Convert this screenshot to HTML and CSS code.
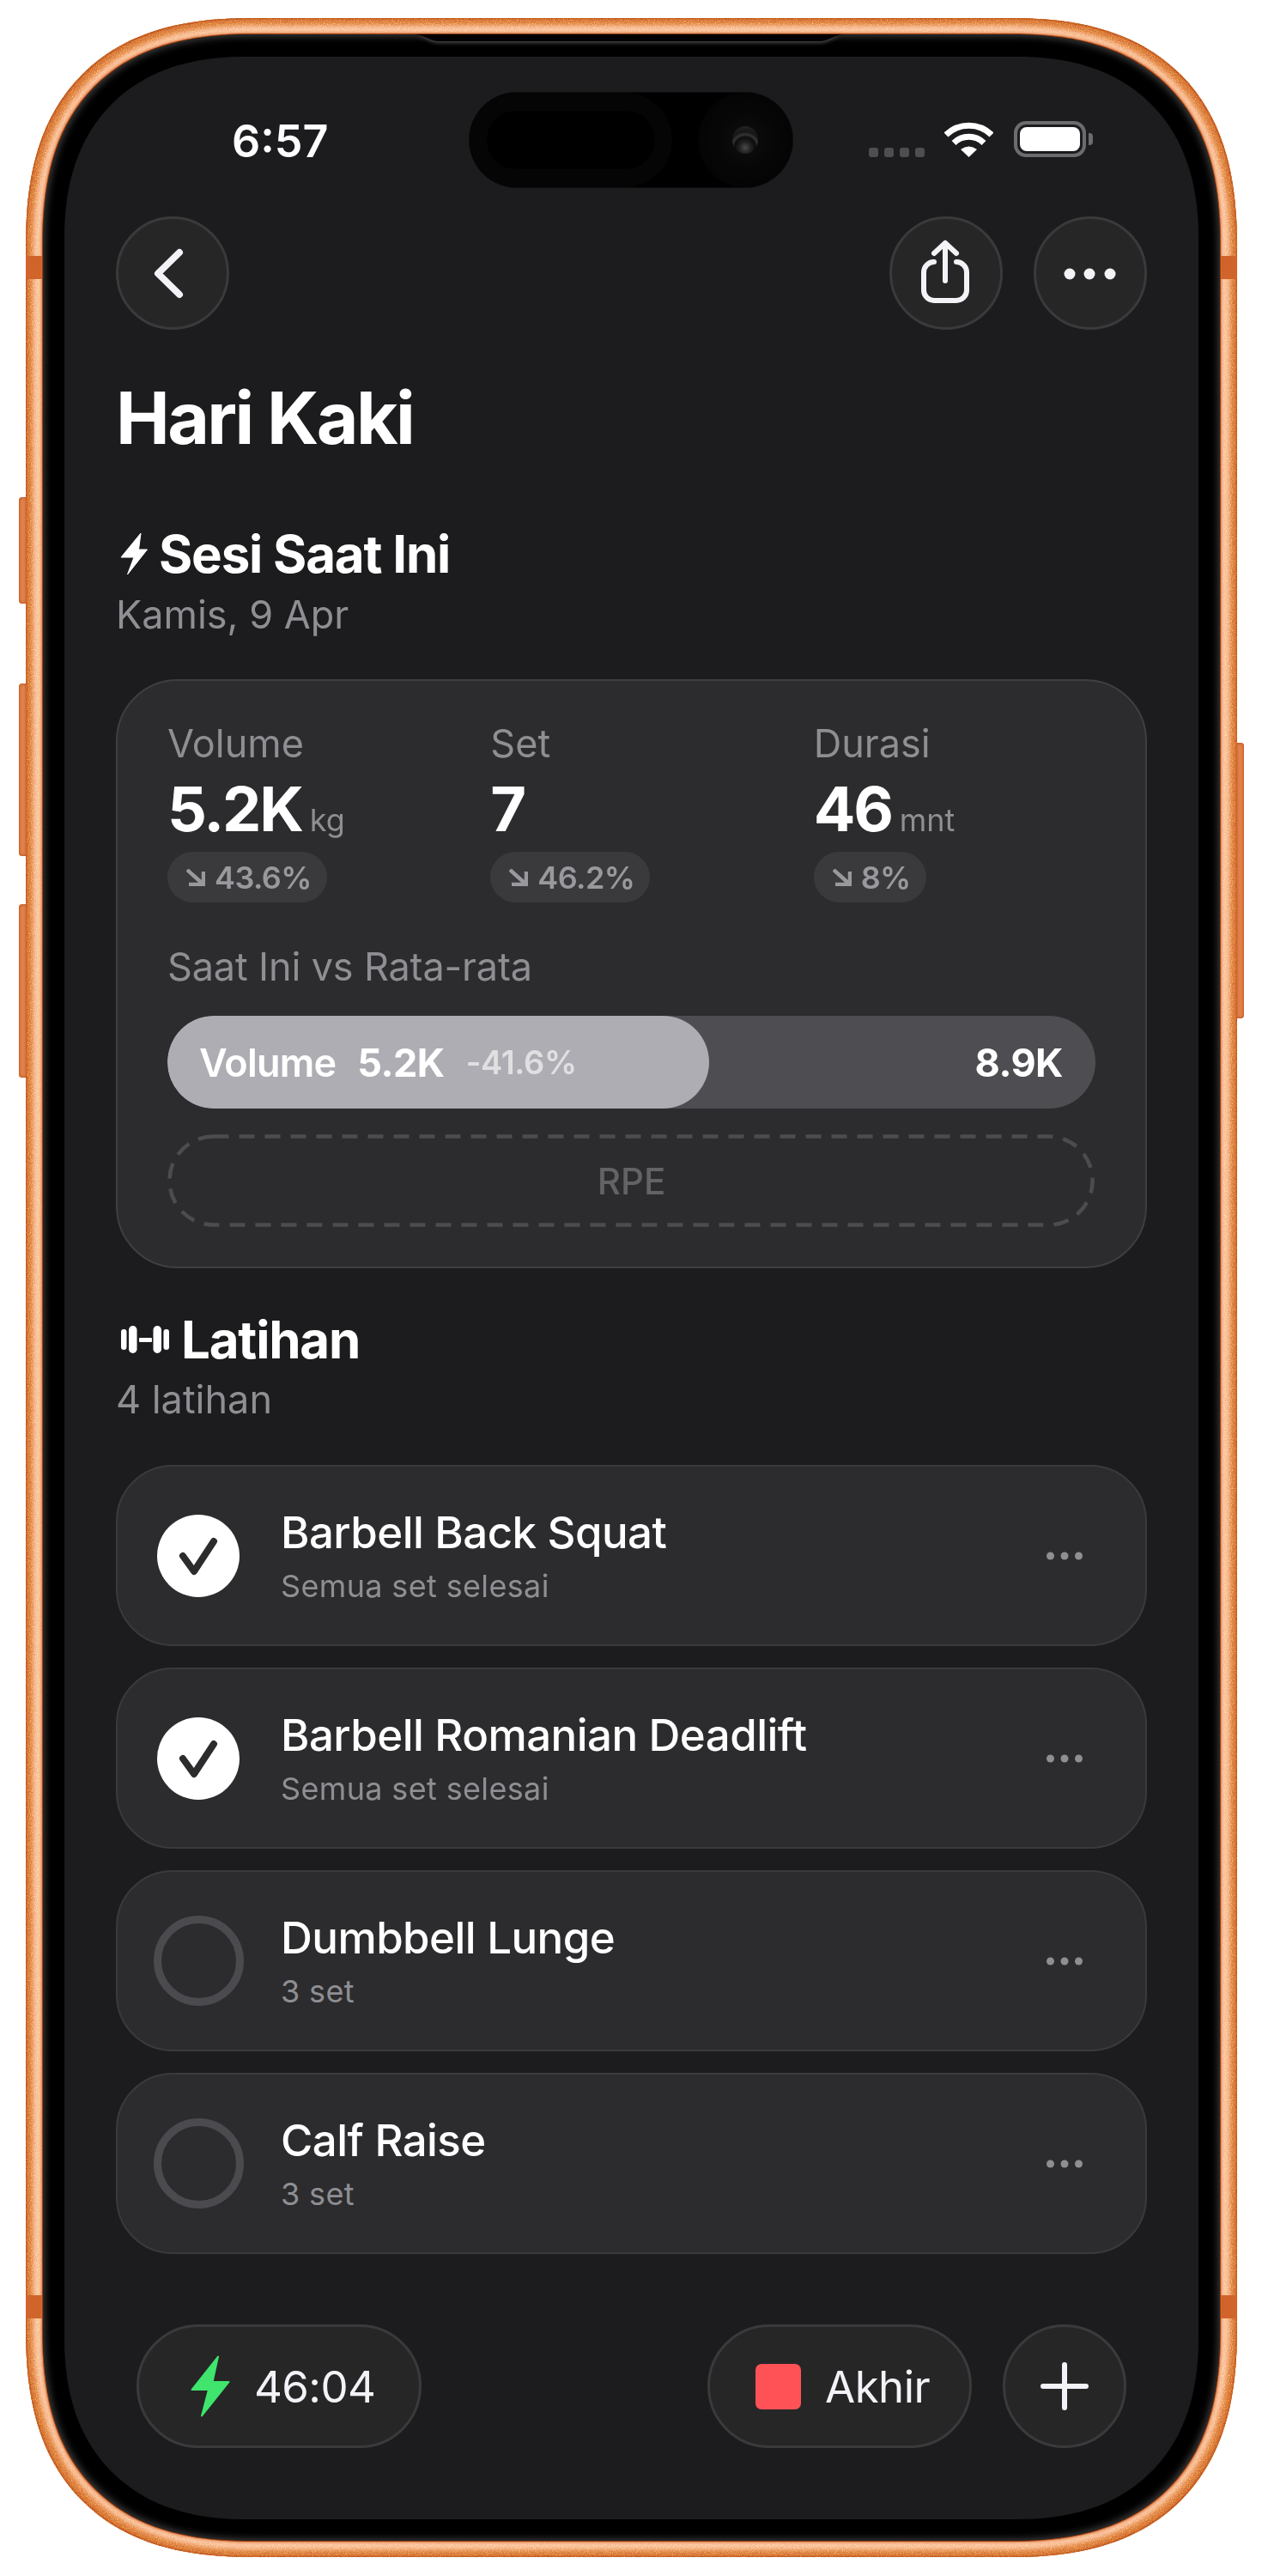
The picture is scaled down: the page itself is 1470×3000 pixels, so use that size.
FILE: index.html
```html
<!DOCTYPE html>
<html lang="id">
<head>
<meta charset="utf-8">
<title>Hari Kaki</title>
<link rel="stylesheet" href="styles.css">
</head>
<body>
<div class="phone">
  <svg class="grain" width="1411" height="2957" aria-hidden="true"><filter id="grainf"><feTurbulence type="fractalNoise" baseFrequency="0.9" numOctaves="2" seed="4"/><feColorMatrix values="0 0 0 0 1  0 0 0 0 .7  0 0 0 0 .5  0 0 0 2 -.85"/></filter><rect width="1411" height="2957" filter="url(#grainf)"/></svg>
  <span class="hw hw-a"></span><span class="hw hw-b"></span><span class="hw hw-c"></span><span class="hw hw-d"></span>
  <span class="band band-tl"></span><span class="band band-tr"></span><span class="band band-bl"></span><span class="band band-br"></span>
  <div class="bezel">
    <svg class="lip" width="514" height="12" viewBox="0 0 514 12" aria-hidden="true"><path d="M4 0C20 0 22 7 34 8H480C492 7 494 0 510 0Z"/></svg>
    <main class="screen">
      <div class="status">
        <span class="time">6:57</span>
        <div class="island"><div class="isl-left"><div class="isl-inner"></div></div><div class="isl-cam"><div class="lens"></div></div></div>
        <div class="status-right">
          <div class="signal"><i></i><i></i><i></i><i></i></div>
          <svg class="wifi" width="57" height="41" viewBox="0 0 57 41"><path d="M2 15A38 38 0 0 1 55 15" fill="none" stroke="#fff" stroke-width="7"/><path d="M11 24.500A25 25 0 0 1 46 24.500" fill="none" stroke="#fff" stroke-width="7"/><path d="M28.500 41L19 32Q28.500 25 38 32Z" fill="#fff"/></svg>
          <div class="battery"><div class="battery-fill"></div></div>
          <span class="battery-nub"></span>
        </div>
      </div>

      <nav class="nav">
        <button class="round" aria-label="Kembali"><svg width="132" height="132" viewBox="0 0 132 132" class="ico ico-back"><path d="M74 42L49 66.500L74 91"/></svg></button>
        <span class="spacer"></span>
        <button class="round" aria-label="Bagikan"><svg width="132" height="132" viewBox="0 0 132 132" class="ico"><path d="M52 53H52A12 12 0 0 0 40 65V86A12 12 0 0 0 52 98H78A12 12 0 0 0 90 86V65A12 12 0 0 0 78 53"/><path d="M65 75V32M52 43L65 31L78 43"/></svg></button>
        <button class="round" aria-label="Lainnya"><svg width="132" height="132" viewBox="0 0 132 132"><circle cx="42" cy="67" r="6.500" fill="#f2f2f7"/><circle cx="65" cy="67" r="6.500" fill="#f2f2f7"/><circle cx="89" cy="67" r="6.500" fill="#f2f2f7"/></svg></button>
      </nav>

      <div class="content">
        <h1 class="title">Hari Kaki</h1>

        <h2 class="head head-session"><svg width="32" height="50" viewBox="0 0 32 50"><path d="M24 1L1 29H16L8.500 49L31.500 20H21.500Z" fill="#fff" stroke="#fff" stroke-width="1" stroke-linejoin="round"/></svg><span>Sesi Saat Ini</span></h2>
        <p class="sub">Kamis, 9 Apr</p>

        <section class="card">
          <div class="stats">
            <div class="stat">
              <div class="stat-label">Volume</div>
              <div class="stat-value">5.2K<small>kg</small></div>
              <div class="delta"><svg width="22" height="20" viewBox="0 0 22 20" class="arrow"><path d="M1 1L20 18M20 3V18H3"/></svg>43.6%</div>
            </div>
            <div class="stat">
              <div class="stat-label">Set</div>
              <div class="stat-value">7</div>
              <div class="delta"><svg width="22" height="20" viewBox="0 0 22 20" class="arrow"><path d="M1 1L20 18M20 3V18H3"/></svg>46.2%</div>
            </div>
            <div class="stat">
              <div class="stat-label">Durasi</div>
              <div class="stat-value">46<small>mnt</small></div>
              <div class="delta"><svg width="22" height="20" viewBox="0 0 22 20" class="arrow"><path d="M1 1L20 18M20 3V18H3"/></svg>8%</div>
            </div>
          </div>
          <div class="cmp-label">Saat Ini vs Rata-rata</div>
          <div class="bar">
            <div class="bar-fill" style="width:58.33%"><span class="bar-name">Volume</span><b>5.2K</b><span class="bar-pct">-41.6%</span></div>
            <b class="bar-avg">8.9K</b>
          </div>
          <div class="rpe">
            <svg class="rpe-line" width="1080" height="108" viewBox="0 0 1080 108" aria-hidden="true"><rect x="2.500" y="2.500" width="1075" height="103" rx="51" fill="none" stroke="#4c4c50" stroke-width="4.500" stroke-dasharray="18 12"/></svg>
            RPE
          </div>
        </section>

        <h2 class="head head-list"><svg width="56" height="34" viewBox="0 0 56 34" fill="#fff"><rect x="0" y="5" width="6.500" height="24" rx="3.250"/><rect x="9" y="1" width="9.500" height="32" rx="4.750"/><rect x="21" y="15" width="15" height="5" rx="1"/><rect x="37.500" y="1" width="9.500" height="32" rx="4.750"/><rect x="49.500" y="5" width="6.500" height="24" rx="3.250"/></svg><span>Latihan</span></h2>
        <p class="sub sub-list">4 latihan</p>

        <div class="list">
          <article class="row">
            <div class="slot"><span class="check"><svg width="96" height="96" viewBox="0 0 96 96"><path d="M30 48L43 66L66 31" fill="none" stroke="#2c2c2e" stroke-width="8" stroke-linecap="round" stroke-linejoin="round"/></svg></span></div>
            <div class="row-text"><div class="row-title">Barbell Back Squat</div><div class="row-sub">Semua set selesai</div></div>
            <div class="slot"><svg width="42" height="10" viewBox="0 0 42 10" fill="#8e8e93"><circle cx="4.500" cy="5" r="4.500"/><circle cx="21" cy="5" r="4.500"/><circle cx="37.500" cy="5" r="4.500"/></svg></div>
          </article>
          <article class="row">
            <div class="slot"><span class="check"><svg width="96" height="96" viewBox="0 0 96 96"><path d="M30 48L43 66L66 31" fill="none" stroke="#2c2c2e" stroke-width="8" stroke-linecap="round" stroke-linejoin="round"/></svg></span></div>
            <div class="row-text"><div class="row-title">Barbell Romanian Deadlift</div><div class="row-sub">Semua set selesai</div></div>
            <div class="slot"><svg width="42" height="10" viewBox="0 0 42 10" fill="#8e8e93"><circle cx="4.500" cy="5" r="4.500"/><circle cx="21" cy="5" r="4.500"/><circle cx="37.500" cy="5" r="4.500"/></svg></div>
          </article>
          <article class="row">
            <div class="slot"><span class="ring"></span></div>
            <div class="row-text"><div class="row-title">Dumbbell Lunge</div><div class="row-sub">3 set</div></div>
            <div class="slot"><svg width="42" height="10" viewBox="0 0 42 10" fill="#8e8e93"><circle cx="4.500" cy="5" r="4.500"/><circle cx="21" cy="5" r="4.500"/><circle cx="37.500" cy="5" r="4.500"/></svg></div>
          </article>
          <article class="row">
            <div class="slot"><span class="ring"></span></div>
            <div class="row-text"><div class="row-title">Calf Raise</div><div class="row-sub">3 set</div></div>
            <div class="slot"><svg width="42" height="10" viewBox="0 0 42 10" fill="#8e8e93"><circle cx="4.500" cy="5" r="4.500"/><circle cx="21" cy="5" r="4.500"/><circle cx="37.500" cy="5" r="4.500"/></svg></div>
          </article>
        </div>
      </div>

      <footer class="dock">
        <div class="pill pill-timer"><svg width="46" height="72" viewBox="0 0 46 72"><path d="M32 1.500L1.500 40H21L13 70.500L44.500 31H25.500Z" fill="#3fe56c" stroke="#3fe56c" stroke-width="2" stroke-linejoin="round"/></svg><span>46:04</span></div>
        <span class="spacer"></span>
        <div class="pill pill-end"><span class="stop"></span><span>Akhir</span></div>
        <button class="round round-lg" aria-label="Tambah"><svg width="56" height="56" viewBox="0 0 56 56" class="ico"><path d="M28 3V53M3 28H53"/></svg></button>
      </footer>
    </main>
  </div>
</div>
</body>
</html>
```
FILE: styles.css
```css
* { box-sizing: border-box; }
html, body { margin: 0; padding: 0; background: #fff; }
body { padding: 21px 0 0 30px; height: 3000px; overflow: hidden; font-family: Inter, "Liberation Sans", sans-serif; color: #fff; }

.phone {
  position: relative;
  width: 1411px;
  height: 2957px;
  padding: 19px 20px;
  border-radius: 268px;
  corner-shape: superellipse(1.3);
  background: #fbbf98;
  box-shadow: inset 0 0 0 1.5px #bb5722, inset 0 0 4px 5px #d06c35, inset 0 0 5px 9px #e3834b;
}
.grain { position: absolute; left: 0; top: 0; border-radius: 268px; corner-shape: superellipse(1.3); mix-blend-mode: overlay; }
.hw { position: absolute; width: 9px; background: #e2814a; box-shadow: inset 0 0 3px 1px #c05a24; }
.hw-a { left: -8px; top: 558px; height: 124px; border-radius: 4px 0 0 4px; }
.hw-b { left: -8px; top: 775px; height: 201px; border-radius: 4px 0 0 4px; }
.hw-c { left: -8px; top: 1032px; height: 202px; border-radius: 4px 0 0 4px; }
.hw-d { right: -8px; top: 844px; height: 321px; border-radius: 0 4px 4px 0; }
.band { position: absolute; width: 20px; height: 27px; background: #d0642b; }
.band-tl { left: 0; top: 277px; }
.band-tr { right: 0; top: 277px; }
.band-bl { left: 0; top: 2652px; }
.band-br { right: 0; top: 2652px; }

.bezel {
  position: relative;
  height: 2919px;
  padding: 26px 25px 25px;
  border-radius: 248px;
  corner-shape: superellipse(1.3);
  background: #000;
  box-shadow: 0 0 0 1px #9c3f0d, 0 0 3px 2px rgba(214,106,52,.85), inset 0 0 9px 2px #3e3e40;
}
.lip { position: absolute; left: 426px; top: 0; fill: #000; filter: drop-shadow(0 2px 2px #48484a); }

.screen {
  position: relative;
  height: 2868px;
  border-radius: 212px;
  corner-shape: superellipse(1.2);
  background: #1c1c1e;
  overflow: hidden;
}

.status { display: flex; align-items: flex-start; padding-top: 42px; height: 152px; }
.time { width: 472px; padding: 27px 0 0 195px; font-size: 52px; line-height: 60px; font-weight: 600; color: #fff; }
.island { display: flex; justify-content: space-between; width: 376px; height: 110px; border-radius: 55px; background: #000; box-shadow: 0 0 0 1px #0c0c0d; }
.isl-left { display: flex; align-items: center; justify-content: center; width: 236px; height: 110px; border-radius: 55px; background: #050505; }
.isl-inner { width: 196px; height: 68px; border-radius: 34px; background: #000; }
.isl-cam { display: flex; align-items: center; justify-content: center; width: 110px; height: 110px; border-radius: 50%; background: radial-gradient(circle, #0e0e10 0, #070708 40%, #040404 70%); }
.lens { width: 30px; height: 32px; border-radius: 50%; background: radial-gradient(circle at 50% 78%, #4a4a4a 0, #232325 22%, #0c0c0c 42%, #343436 52%, #151515 64%, #2c2c2e 100%); }
.status-right { display: flex; align-items: flex-start; margin-left: 89px; padding-top: 34px; }
.signal { display: flex; gap: 7px; padding-top: 30px; }
.signal i { width: 11px; height: 11px; border-radius: 3px; background: #4e4e50; }
.wifi { margin: 0 0 0 23px; }
.battery { margin-left: 24px; margin-top: -1px; width: 84px; height: 42px; padding: 3px; border: 4px solid #6c6c6e; border-radius: 14px; }
.battery-fill { height: 100%; border-radius: 8px; background: #fff; }
.battery-nub { width: 5px; height: 14px; margin: 13px 0 0 3px; border-radius: 0 4px 4px 0; background: #6c6c6e; }

.nav { display: flex; gap: 36px; padding: 34px 60px 0; }
.spacer { flex: 1; }
.round { display: block; flex: none; width: 132px; height: 132px; padding: 0; border: 3px solid #3a3a3c; border-radius: 50%; background: #262627; }
.round svg { display: block; margin: -3px; }
.ico { fill: none; stroke: #f2f2f7; stroke-width: 6; stroke-linecap: round; stroke-linejoin: round; }
.ico-back { stroke-width: 8; }

.content { padding: 0 60px; }
.title { margin: 49px 0 0; font-size: 84px; line-height: 108px; font-weight: 700; letter-spacing: -2.600px; }
.head { display: flex; align-items: center; margin: 0; font-size: 60px; line-height: 72px; font-weight: 700; letter-spacing: -1.200px; }
.head-session { margin-top: 68px; gap: 13px; padding-left: 5px; }
.head-list { margin-top: 47px; gap: 14px; padding-left: 6px; }
.sub { margin: 8px 0 0; font-size: 45px; line-height: 54px; color: #8e8e93; }
.sub-list { margin-top: 7px; }

.card { margin-top: 48px; padding: 46px 58px; border: 2px solid #3f3f42; border-radius: 72px; background: #2c2c2e; }
.stats { display: grid; grid-template-columns: repeat(3, 1fr); gap: 48px; }
.stat-label { font-size: 45px; line-height: 54px; color: #8e8e93; }
.stat-value { margin-top: 6px; font-size: 72px; line-height: 86px; font-weight: 700; letter-spacing: -2.200px; }
.stat-value small { margin-left: 9px; font-size: 36px; line-height: 0; font-weight: 400; letter-spacing: 0; color: #8e8e93; }
.delta { display: inline-flex; align-items: center; gap: 11px; height: 59px; margin-top: 7px; padding: 0 18px 0 22px; border-radius: 30px; background: #3a3a3c; font-size: 36px; font-weight: 600; letter-spacing: -.600px; color: #98989d; }
.arrow { fill: none; stroke: #98989d; stroke-width: 4.500; }
.cmp-label { margin-top: 48px; font-size: 45px; line-height: 54px; letter-spacing: -.150px; color: #8e8e93; }
.bar { display: flex; align-items: center; height: 108px; margin-top: 30px; border-radius: 54px; background: #4e4e52; overflow: hidden; font-size: 45px; }
.bar-fill { display: flex; align-items: center; gap: 25px; height: 108px; padding-left: 37px; border-radius: 54px; background: #adadb3; }
.bar-name { font-weight: 600; letter-spacing: -.800px; }
.bar b { font-weight: 700; letter-spacing: -.500px; }
.bar-pct { font-size: 38px; font-weight: 600; letter-spacing: -.400px; color: rgba(255,255,255,.62); }
.bar-avg { margin-left: auto; padding-right: 38px; }
.rpe { position: relative; display: flex; align-items: center; justify-content: center; height: 108px; margin-top: 30px; font-size: 42px; font-weight: 500; color: #636366; }
.rpe-line { position: absolute; left: 0; top: 0; }

.list { display: flex; flex-direction: column; gap: 25px; margin-top: 49px; }
.row { display: flex; align-items: center; gap: 42px; height: 211px; padding: 0 40px; border: 2px solid #3a3a3c; border-radius: 66px; background: #2c2c2e; }
.slot { display: flex; flex: none; align-items: center; justify-content: center; width: 108px; height: 108px; }
.check { display: block; width: 96px; height: 96px; border-radius: 50%; background: #fff; }
.check svg { display: block; }
.ring { display: block; width: 105px; height: 105px; border: 9px solid #4b4b4f; border-radius: 50%; }
.row-text { flex: 1; }
.row-title { font-size: 51px; line-height: 61px; font-weight: 500; letter-spacing: -.550px; }
.row-sub { margin-top: 10px; font-size: 36px; line-height: 44px; letter-spacing: .350px; color: #8e8e93; }

.dock { display: flex; align-items: center; gap: 36px; margin-top: 82px; padding: 0 84px; }
.pill { display: flex; align-items: center; height: 144px; border: 3px solid #3a3a3c; border-radius: 72px; background: #262627; font-size: 51px; letter-spacing: -.600px; color: #f2f2f7; }
.pill-timer { gap: 28px; padding: 0 51px 0 60px; }
.pill-end { gap: 28px; padding: 0 46px 0 53px; }
.stop { width: 53px; height: 53px; border-radius: 7px; background: #ff5257; }
.round-lg { width: 144px; height: 144px; }
.round-lg svg { margin: 41px; }
```
